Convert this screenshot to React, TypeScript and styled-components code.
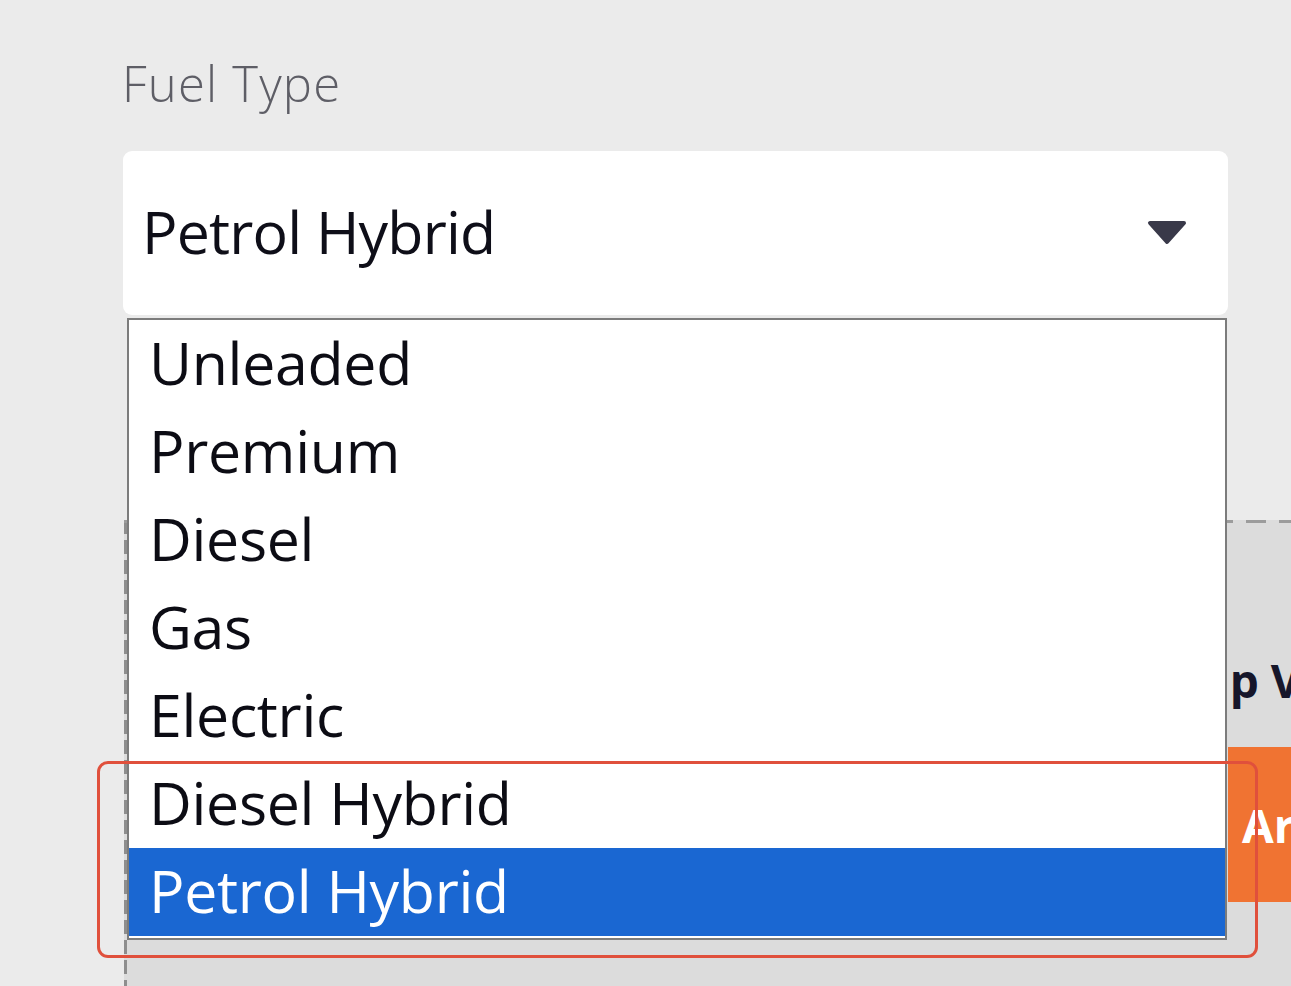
import { useState } from "react"
import styled, { createGlobalStyle } from "styled-components"

const GlobalStyle = createGlobalStyle`
  html, body {
    margin: 0;
    padding: 0;
    background: #ebebeb;
    overflow: hidden;
  }
  body {
    font-family: "Open Sans", "Liberation Sans", sans-serif;
  }
`

const Page = styled.div`
  position: relative;
  width: 1291px;
  height: 986px;
  overflow: hidden;
  padding: 52px 0 0 122px;
  box-sizing: border-box;
`

const Field = styled.div`
  position: relative;
  width: 1106px;
  display: flex;
  flex-direction: column;
`

const Label = styled.label`
  font-size: 49px;
  font-weight: 300;
  color: #5e5e66;
  line-height: 62px;
  margin-bottom: 37px;
  letter-spacing: 1.2px;
`

const SelectBox = styled.div`
  height: 164px;
  margin-left: 1px;
  background: #fff;
  border-radius: 9px;
  display: flex;
  align-items: center;
  justify-content: space-between;
  padding: 0 40px 0 19px;
  box-sizing: border-box;
  position: relative;
  z-index: 2;
`

const SelectValue = styled.span`
  font-size: 59px;
  font-weight: 500;
  color: #0e0e18;
  letter-spacing: -0.8px;
  margin-top: -4px;
`

const Menu = styled.ul`
  position: absolute;
  top: 266px;
  left: 5px;
  width: 1100px;
  margin: 0;
  padding: 0 0 2px;
  list-style: none;
  background: #fff;
  border: 2px solid #7c7c7c;
  box-sizing: border-box;
  z-index: 3;
`

const Option = styled.li<{ $active?: boolean }>`
  height: 88px;
  display: flex;
  align-items: center;
  padding-left: 20px;
  font-size: 59px;
  font-weight: 400;
  letter-spacing: -0.3px;
  color: ${(p) => (p.$active ? "#fff" : "#0c0c14")};
  background: ${(p) => (p.$active ? "#1a67d2" : "#fff")};
  span {
    margin-top: -4px;
  }
`

const Panel = styled.section`
  position: relative;
  margin-top: 205px;
  margin-left: 2px;
  width: 1300px;
  height: 520px;
  padding: 3px 0 0 3px;
  box-sizing: border-box;
  background:
    repeating-linear-gradient(90deg, #9c9c9c 0 20px, transparent 20px 33px) top left / 100% 3px no-repeat,
    repeating-linear-gradient(180deg, #8e8e8e 0 14px, transparent 14px 20px) top left / 3px 100% no-repeat,
    #dcdcdc;
  display: grid;
  grid-template-columns: 1000px 1fr;
  grid-template-rows: 117px 80px 155px;
`

const PanelTitle = styled.h2`
  grid-column: 2;
  grid-row: 2;
  margin: 0;
  font-family: "Open Sans", sans-serif;
  font-weight: 700;
  font-size: 46px;
  color: #16162a;
  white-space: nowrap;
  align-self: center;
`

const AddButton = styled.button`
  grid-column: 2;
  grid-row: 3;
  margin-left: 101px;
  margin-top: 27px;
  height: 155px;
  width: 260px;
  border: none;
  background: #f07332;
  color: #fff;
  font-family: "Open Sans", sans-serif;
  font-weight: 700;
  font-size: 46px;
  text-align: left;
  padding-left: 14px;
`

const Highlight = styled.div`
  position: absolute;
  left: 97px;
  top: 761px;
  width: 1161px;
  height: 197px;
  border: 3px solid #e0503c;
  border-radius: 11px;
  box-sizing: border-box;
  pointer-events: none;
  z-index: 5;
`

const Caret = () => (
  <svg width="42" height="26" viewBox="0 0 42 26">
    <path d="M4 3 H38 L21 22 Z" fill="#393949" stroke="#393949" strokeWidth="4" strokeLinejoin="round" />
  </svg>
)

const options = ["Unleaded", "Premium", "Diesel", "Gas", "Electric", "Diesel Hybrid", "Petrol Hybrid"]

export default function App() {
  const [value, setValue] = useState("Petrol Hybrid")

  return (
    <>
      <GlobalStyle />
      <Page>
        <Field>
          <Label>Fuel Type</Label>
          <SelectBox>
            <SelectValue>{value}</SelectValue>
            <Caret />
          </SelectBox>
          <Menu>
            {options.map((o) => (
              <Option key={o} $active={o === value} onClick={() => setValue(o)}>
                <span>{o}</span>
              </Option>
            ))}
          </Menu>
        </Field>
        <Panel>
          <PanelTitle>Setup Vehicle</PanelTitle>
          <AddButton>Archive</AddButton>
        </Panel>
        <Highlight />
      </Page>
    </>
  )
}
